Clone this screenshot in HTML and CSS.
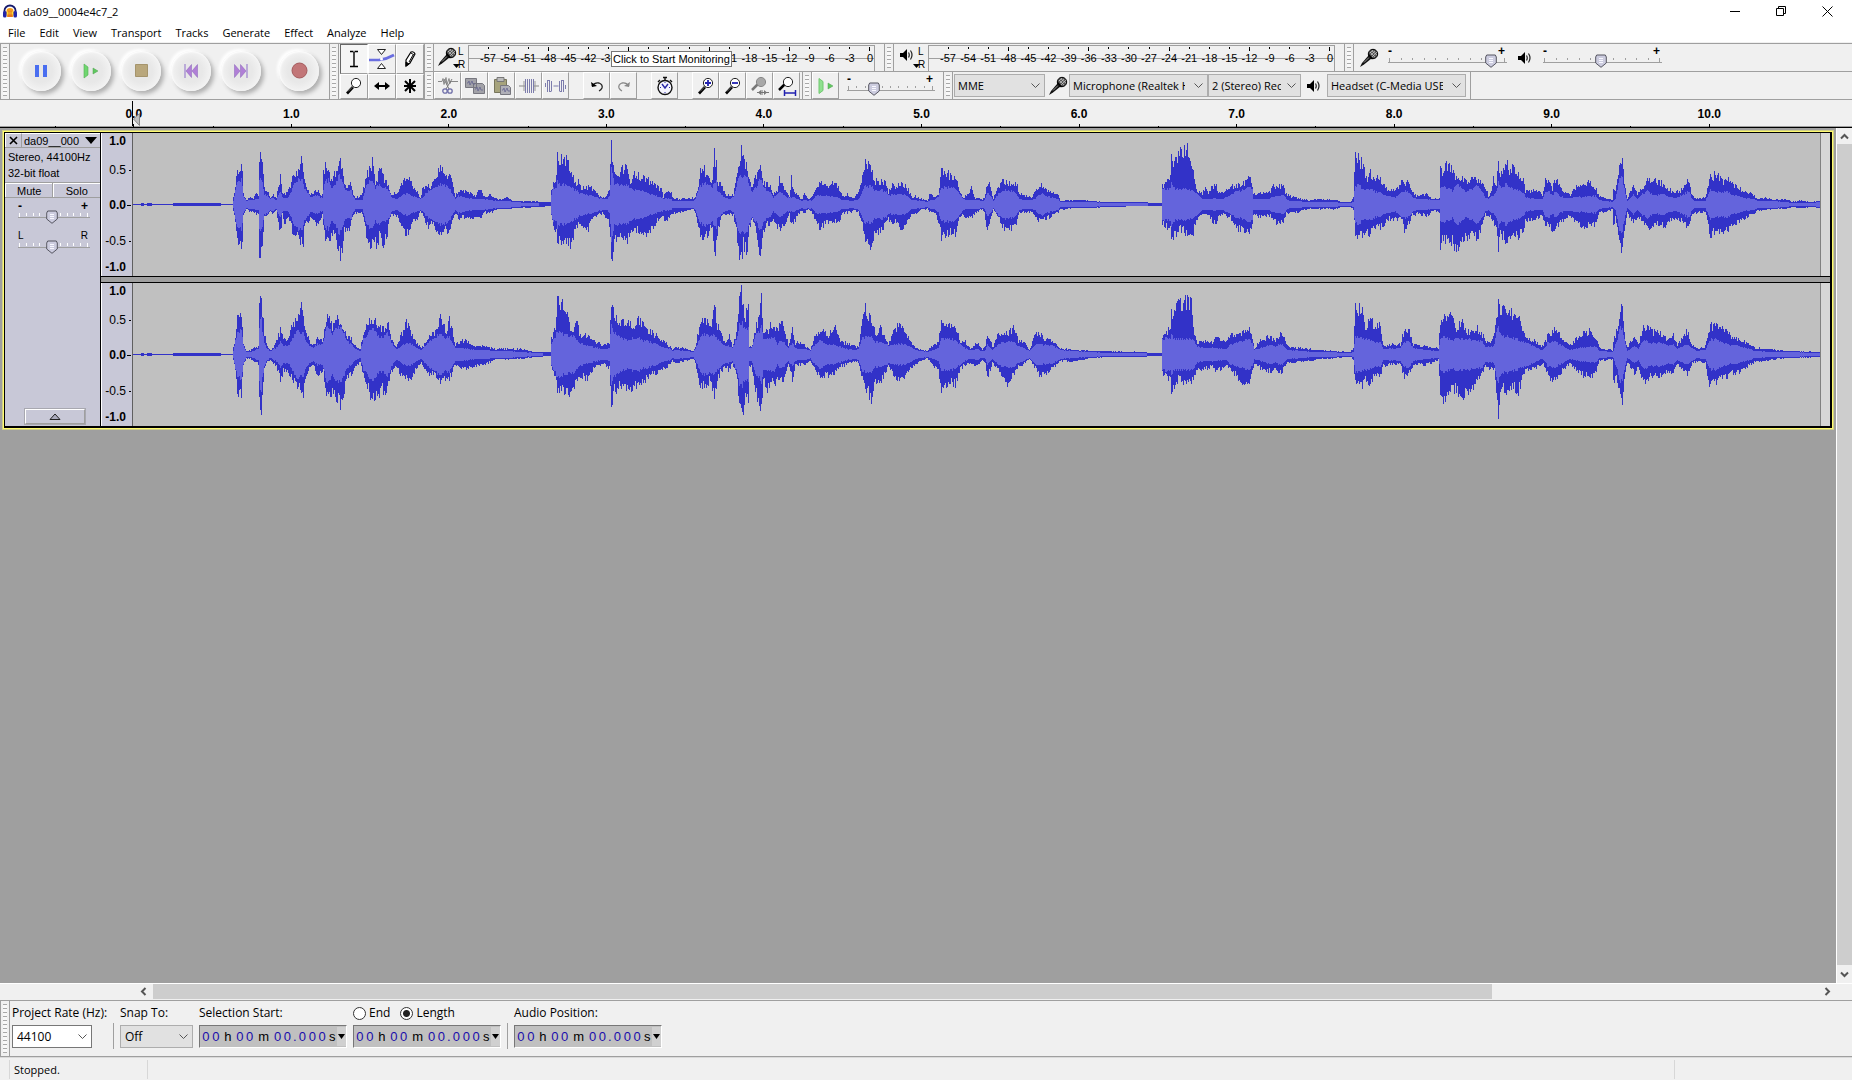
FILE: index.html
```html
<!DOCTYPE html>
<html lang="en">
<head>
<meta charset="utf-8">
<title>da09__0004e4c7_2</title>
<link rel="stylesheet" href="styles.css">
</head>
<body>
<svg class="defs" aria-hidden="true">
  <symbol id="mic" viewBox="0 0 20 20">
    <path d="M1 19L3 15L9.500 7.500L12.500 10.500L5 16.500Z" fill="#111"/>
    <path d="M5 14.500L10 9.500" stroke="#999"/>
    <circle cx="14" cy="6" r="4.700" fill="#555" stroke="#000"/>
    <path d="M11 5l3-3M12 7l4-4M13 9l5-5M11 4l5 5M13 3l5 4" stroke="#ccc" stroke-width=".7"/>
    <path d="M9.500 6.500L13.500 11" stroke="#000" stroke-width="1.500"/>
  </symbol>
  <symbol id="speaker" viewBox="0 0 14 14">
    <path d="M0 5h3l4-4v12l-4-4H0z" fill="#000"/>
    <path d="M8.500 4.500q1.500 2.500 0 5M10.500 2.500q3 4.500 0 9" fill="none" stroke="#222" stroke-width="1.200"/>
  </symbol>
  <symbol id="lens" viewBox="0 0 18 18">
    <path d="M2 16.500L8 10" stroke="#000" stroke-width="2.600"/>
    <path d="M3 14.500L8 9.500" stroke="#999" stroke-width=".7"/>
    <circle cx="11" cy="6" r="4.600" fill="#fff" stroke="#222"/>
  </symbol>
</svg>

<header class="titlebar">
  <svg class="logo" viewBox="0 0 16 15"><path d="M5 5q3-2 6 0l1 4-1 4H5L4 9z" fill="#f59a1b"/><path d="M5 9h6" stroke="#ffdf30" stroke-width="3"/><path d="M7 7v6M9 7v6" stroke="#d8431b" stroke-width=".8"/><path d="M2.500 9V6.500a5.500 5 0 0 1 11 0V9" fill="none" stroke="#151a6c" stroke-width="1.800"/><rect x="1" y="7" width="3.500" height="6.500" rx="1.500" fill="#2226a8"/><rect x="11.500" y="7" width="3.500" height="6.500" rx="1.500" fill="#2226a8"/></svg>
  <h1>da09__0004e4c7_2</h1>
  <div class="window-buttons">
    <button aria-label="Minimize"><svg width="11" height="11"><path d="M0 5.500h10" stroke="#000"/></svg></button>
    <button aria-label="Restore"><svg width="11" height="11"><path d="M.5 2.500h7v7h-7zM2.500 2.500v-2h7v7h-2" fill="none" stroke="#000"/></svg></button>
    <button aria-label="Close"><svg width="11" height="11"><path d="M.5.500l10 10M10.500.500l-10 10" stroke="#000"/></svg></button>
  </div>
</header>

<nav class="menubar">
  <button>File</button><button>Edit</button><button>View</button><button>Transport</button><button>Tracks</button><button>Generate</button><button>Effect</button><button>Analyze</button><button>Help</button>
</nav>

<section class="toolbars">
  <div class="bar transport">
    <i class="grip"></i>
    <div class="round-buttons">
      <button aria-label="Pause"><svg width="14" height="14"><path d="M1 1h4v12H1zM9 1h4v12H9z" fill="#4a6ef0"/></svg></button>
      <button aria-label="Play"><svg width="16" height="16"><path d="M1 1l4 3v8l-4 3z" fill="#6fd66f" stroke="#52b052" stroke-width=".6"/><path d="M10 5l5 3-5 3z" fill="#5fc85f" stroke="#52a052" stroke-width=".5"/></svg></button>
      <button aria-label="Stop"><svg width="13" height="13"><path d="M.5.500h12v12H.5z" fill="#b9a77c" stroke="#a5946c"/></svg></button>
      <button aria-label="Skip to start"><svg width="14" height="14"><path d="M1 0v14" stroke="#8d6cc8"/><path d="M7.500.500v13L2 7zM13.500.500v13L8 7z" fill="#b07fd6" stroke="#8861b8" stroke-width=".5"/></svg></button>
      <button aria-label="Skip to end"><svg width="14" height="14"><path d="M13 0v14" stroke="#8d6cc8"/><path d="M.5.500v13L6 7zM6.500.500v13L12 7z" fill="#b07fd6" stroke="#8861b8" stroke-width=".5"/></svg></button>
      <button class="record" aria-label="Record"><svg width="17" height="17"><circle cx="8.500" cy="8.500" r="7.500" fill="#c27678" stroke="#a45a5c"/></svg></button>
    </div>
  </div>

  <div class="bar tools">
    <i class="grip"></i>
    <div class="tool-grid">
      <button class="active" aria-label="Selection tool"><svg width="20" height="20"><path d="M6 2.500h3.500M10.500 2.500H14M10 3v14M6 17.500h8" stroke="#000" stroke-width="1.400"/></svg></button>
      <button aria-label="Envelope tool"><svg width="26" height="22"><path d="M8.500 1.500h8l-4 5zM8.500 20.500h8l-4-5z" fill="#fff" stroke="#222"/><path d="M0 12h10q8-1 15-5" fill="none" stroke="#6a6ee0" stroke-width="2.600"/><circle cx="12.500" cy="11" r="1.500" fill="#fff"/></svg></button>
      <button aria-label="Draw tool"><svg width="14" height="18"><path d="M3 10L8 2q3-1 4 2L7 13l-4 3z" fill="#fff" stroke="#000" stroke-width="1.200"/><path d="M3 12v4l3-2zM8 3l3 2M6 12l4-7" stroke="#000" fill="#000"/></svg></button>
      <button aria-label="Zoom tool"><svg width="18" height="18"><use href="#lens"/></svg></button>
      <button aria-label="Time shift tool"><svg width="18" height="12"><path d="M3 6h12" stroke="#000" stroke-width="2"/><path d="M1 6l5-4v8zM17 6l-5-4v8z"/></svg></button>
      <button aria-label="Multi-tool"><svg width="14" height="16"><path d="M7 1v14M1 8h12M2 3l10 10M12 3L2 13" stroke="#000" stroke-width="2"/></svg></button>
    </div>
  </div>

  <div class="stack">
    <div class="row">
      <div class="bar meterbar">
        <i class="grip"></i>
        <button class="meter-menu" aria-label="Record meter"><svg width="20" height="20"><use href="#mic"/></svg><svg class="drop" width="7" height="4"><path d="M0 0h7L3.500 4z"/></svg></button>
        <div class="lr"><span>L</span><span>R</span></div>
        <div class="meter"><div class="scale" data-covered="-36 -33 -30 -27 -24"></div><div class="tooltip" role="tooltip">Click to Start Monitoring</div></div>
      </div>
      <div class="bar meterbar">
        <i class="grip"></i>
        <button class="meter-menu play" aria-label="Playback meter"><svg width="14" height="14"><use href="#speaker"/></svg><svg class="drop" width="7" height="4"><path d="M0 0h7L3.500 4z"/></svg></button>
        <div class="lr"><span>L</span><span>R</span></div>
        <div class="meter"><div class="scale"></div></div>
      </div>
      <div class="bar mixer">
        <i class="grip"></i>
        <svg class="big" width="20" height="20"><use href="#mic"/></svg>
        <div class="slider wide"><span>-</span><span>+</span><input type="range" aria-label="Recording volume" min="0" max="100" value="91"></div>
        <svg width="14" height="14"><use href="#speaker"/></svg>
        <div class="slider wide"><span>-</span><span>+</span><input type="range" aria-label="Playback volume" min="0" max="100" value="49"></div>
      </div>
    </div>
    <div class="row">
      <div class="bar edit">
        <i class="grip"></i>
        <button aria-label="Cut"><svg width="20" height="20"><path d="M0 5.500h4l1-3 1 6 2-7 1 7 2-6 1 5 1-2h7" fill="none" stroke="#888"/><path d="M6 3l5 10M14 3L8 13" stroke="#777"/><circle cx="7" cy="15" r="2.200" fill="none" stroke="#6e6ea8" stroke-width="1.300"/><circle cx="12" cy="15" r="2.200" fill="none" stroke="#6e6ea8" stroke-width="1.300"/></svg></button>
        <button aria-label="Copy"><svg width="22" height="18"><path d="M1.500 1.500h11v9h-11zM9.500 6.500h9l2 2v8h-11z" fill="#a2a2a8" stroke="#77777f"/><path d="M3 6h1l1-2 1 4 2-4 1 3h2M11 12h1l1-2 1 4 2-4 1 3h2" fill="none" stroke="#666690" stroke-width=".8"/></svg></button>
        <button aria-label="Paste"><svg width="20" height="20"><path d="M2.500 3.500h12v13h-12z" fill="#a6a37c" stroke="#77755c"/><path d="M5 1.500h7v4H5z" fill="#bbb" stroke="#777"/><path d="M8.500 9.500h8l2 2v7h-10z" fill="#b0b0b8" stroke="#77777f"/><path d="M10 14h1l1-2 1 4 2-4 1 3h2" fill="none" stroke="#666690" stroke-width=".8"/></svg></button>
        <button aria-label="Trim"><svg width="20" height="16"><path d="M0 8h6M15 8h5" stroke="#888"/><path d="M6.500 1v14M8.500 1v14M10.500 1v14M12.500 1v14M14.500 1v14" stroke="#7c7cac"/><path d="M5 3v10M16 3v10" stroke="#999"/></svg></button>
        <button aria-label="Silence"><svg width="22" height="16"><path d="M.5 9V5M2.500 14V2M4.500 14V2M6.500 13V3M8.500 8h5M14.500 13V3M16.500 14V2M18.500 14V2M20.500 11V7M2.500 2.500h2M4.500 13.500h2M14.500 13.500h2M16.500 2.500h2" fill="none" stroke="#7c7cac"/></svg></button>
        <button class="gap-wide" aria-label="Undo"><svg width="14" height="12"><path d="M2 6q3-4 7-3 4 1.500 3 5-1 2-3 3" fill="none" stroke="#222" stroke-width="1.300"/><path d="M1 2l1 5 5-1z"/></svg></button>
        <button aria-label="Redo"><svg width="14" height="12"><path d="M12 6Q9 2 5 3 1 4.500 2 8q1 2 3 3" fill="none" stroke="#888" stroke-width="1.300"/><path d="M13 2l-1 5-5-1z" fill="#888"/></svg></button>
        <button class="gap-wide" aria-label="Sync-lock tracks"><svg width="18" height="20"><path d="M7 1.500h4M9 1v3M14 4l2 2M4 4L2 6" stroke="#111" stroke-width="1.400"/><circle cx="9" cy="11.500" r="7" fill="#f5f5ff" stroke="#111" stroke-width="1.400"/><path d="M6 8l3 4 3-4" fill="none" stroke="#2929a8" stroke-width="1.400"/><path d="M9 6v1M9 16v1M4 11.500h1M13 11.500h1" stroke="#2929a8"/></svg></button>
        <button class="gap-wide" aria-label="Zoom in"><svg width="18" height="18"><use href="#lens"/><path d="M11 3v6M8 6h6" stroke="#2222b0" stroke-width="1.800"/></svg></button>
        <button aria-label="Zoom out"><svg width="18" height="18"><use href="#lens"/><path d="M8 6h6" stroke="#2222b0" stroke-width="1.800"/></svg></button>
        <button aria-label="Fit selection"><svg width="20" height="20"><path d="M2 14l6-6" stroke="#777" stroke-width="2.500"/><circle cx="11" cy="6" r="4.600" fill="#a8a8a8" stroke="#888"/><path d="M7 16.500h12M12 14v5" stroke="#777"/><path d="M11 14v5l-3-2.500zM14 14v5l3-2.500z" fill="#777"/></svg></button>
        <button aria-label="Fit project"><svg width="20" height="20"><path d="M2 14l6-6" stroke="#000" stroke-width="2.500"/><circle cx="11" cy="6" r="4.600" fill="#fff" stroke="#222"/><path d="M7 17h12M7.500 14v6M18.500 14v6" stroke="#2222b0" stroke-width="1.500"/></svg></button>
      </div>
      <div class="bar speed">
        <i class="grip"></i>
        <button aria-label="Play at speed"><svg width="16" height="16"><path d="M1 .5l4 3v9l-4 3z" fill="#8fe08f" stroke="#6fc86f"/><path d="M10 5l5 3-5 3z" fill="#5fc85f" stroke="#52a052" stroke-width=".5"/></svg></button>
        <div class="slider mid"><span>-</span><span>+</span><input type="range" aria-label="Playback speed" min="0" max="100" value="28"></div>
      </div>
      <div class="bar device">
        <i class="grip"></i>
        <select class="w-host" aria-label="Audio host"><option>MME</option></select>
        <svg class="devmic" width="20" height="20"><use href="#mic"/></svg>
        <select class="w-input" aria-label="Recording device"><option>Microphone (Realtek High Definition)</option></select>
        <select class="w-channels" aria-label="Recording channels"><option>2 (Stereo) Recording Channels</option></select>
        <svg class="devspk" width="14" height="14"><use href="#speaker"/></svg>
        <select class="w-output" aria-label="Playback device"><option>Headset (C-Media USB Audio)</option></select>
      </div>
    </div>
  </div>
</section>

<div class="timeline">
  <div class="seconds">
    <span>0.0</span><span>1.0</span><span>2.0</span><span>3.0</span><span>4.0</span><span>5.0</span><span>6.0</span><span>7.0</span><span>8.0</span><span>9.0</span><span>10.0</span>
  </div>
  <svg class="cursor" width="8" height="25"><path d="M.5 0v25" stroke="#000"/><path d="M7.500 12.500v12L1.500 18z" fill="#c0c0c0" stroke="#888"/></svg>
</div>

<main class="project">
  <div class="workspace">
    <article class="track">
      <div class="panel">
        <div class="panel-title">
          <button class="close" aria-label="Close track"><svg width="9" height="9"><path d="M1 1l7 7M8 1L1 8" stroke="#000" stroke-width="1.600"/></svg></button>
          <button class="name"><span>da09__000</span><svg width="12" height="7"><path d="M0 0h12L6 7z"/></svg></button>
        </div>
        <p>Stereo, 44100Hz<br>32-bit float</p>
        <div class="mute-solo"><button>Mute</button><button>Solo</button></div>
        <div class="slider small"><span>-</span><span>+</span><input type="range" aria-label="Gain" min="0" max="100" value="47"></div>
        <div class="slider small pan"><span>L</span><span>R</span><input type="range" aria-label="Pan" min="0" max="100" value="47"></div>
        <button class="collapse" aria-label="Collapse"><svg width="12" height="7"><path d="M1 6.500h10L6 1z" fill="#aaaabc" stroke="#222"/></svg></button>
      </div>
      <div class="channels">
        <div class="channel">
          <div class="vruler"><b>1.0</b><span>0.5</span><b class="zero">0.0</b><span>-0.5</span><b>-1.0</b></div>
          <svg class="wave" data-channel="left" viewBox="0 0 1687 143" preserveAspectRatio="none"></svg>
          <i class="after"></i>
        </div>
        <i class="divider"></i>
        <div class="channel">
          <div class="vruler"><b>1.0</b><span>0.5</span><b class="zero">0.0</b><span>-0.5</span><b>-1.0</b></div>
          <svg class="wave" data-channel="right" viewBox="0 0 1687 143" preserveAspectRatio="none"></svg>
          <i class="after"></i>
        </div>
      </div>
    </article>
  </div>
  <div class="vscroll">
    <button aria-label="Scroll up"><svg width="9" height="7"><path d="M1 5.500l3.500-3.500L8 5.500" fill="none" stroke="#555" stroke-width="2"/></svg></button>
    <i></i>
    <button aria-label="Scroll down"><svg width="9" height="7"><path d="M1 1.500L4.500 5 8 1.500" fill="none" stroke="#555" stroke-width="2"/></svg></button>
  </div>
</main>
<div class="hscroll">
  <button aria-label="Scroll left"><svg width="7" height="9"><path d="M5.500 1L2 4.500 5.500 8" fill="none" stroke="#555" stroke-width="2"/></svg></button>
  <div class="lane"><i></i></div>
  <button aria-label="Scroll right"><svg width="7" height="9"><path d="M1.500 1L5 4.500 1.500 8" fill="none" stroke="#555" stroke-width="2"/></svg></button>
</div>

<section class="selection">
  <i class="grip"></i>
  <div class="group rate"><label for="rate">Project Rate (Hz):</label><select id="rate"><option>44100</option></select></div>
  <i class="rule"></i>
  <div class="group snap"><label for="snap">Snap To:</label><select id="snap"><option>Off</option></select></div>
  <div class="group"><span class="caption">Selection Start:</span><div class="time"></div></div>
  <div class="group"><div class="radios"><label><input type="radio" name="span">End</label><label><input type="radio" name="span" checked>Length</label></div><div class="time"></div></div>
  <i class="rule"></i>
  <div class="group"><span class="caption">Audio Position:</span><div class="time"></div></div>
</section>
<footer class="status"><span></span><span>Stopped.</span><span></span><span></span></footer>
<script src="script.js"></script>
</body>
</html>
```
FILE: styles.css
```css
* { box-sizing: border-box; }
html, body { height: 100%; }
body {
  margin: 0;
  display: flex;
  flex-direction: column;
  background: #f0f0f0;
  color: #000;
  font: 11px/16px "Open Sans", "Noto Sans", sans-serif;
  overflow: hidden;
}
button { margin: 0; padding: 0; border: 0; background: none; font: inherit; color: inherit; display: flex; align-items: center; justify-content: center; }
svg { display: block; flex: none; }
i { display: block; flex: none; }
.defs { position: absolute; width: 0; height: 0; }

.titlebar { display: flex; align-items: center; height: 23px; flex: none; padding: 0 2px; background: #fff; }
.logo { width: 16px; height: 15px; }
.titlebar h1 { margin: 0 auto 0 5px; font-size: 11px; font-weight: 400; }
.window-buttons { display: flex; height: 20px; }
.window-buttons button { width: 46px; }
.menubar { display: flex; height: 20px; flex: none; padding-left: 1px; background: #fff; border-bottom: 1px solid #f0f0f0; }
.menubar button { padding: 0 7px; }

.toolbars { display: flex; height: 57px; flex: none; border-top: 1px solid #9f9f9f; border-bottom: 1px solid #9f9f9f; }
.bar { display: flex; align-items: center; flex: none; }
.grip {
  width: 10px;
  align-self: stretch;
  border: solid #9f9f9f;
  border-width: 0 1px;
  padding: 3px 2px;
  background: repeating-linear-gradient(#a8a8a8 0 1px, #f8f8f8 1px 4px) content-box;
}
.transport { width: 329px; }
.round-buttons { display: flex; gap: 10px; padding: 0 0 2px 11px; }
.round-buttons button {
  width: 40px;
  height: 40px;
  border-radius: 50%;
  background: radial-gradient(circle, #e8e8e8 0 40%, #f4f4f4 75%);
  box-shadow: 3px 3px 4px #b0b0b0, -2px -2px 3px #fff, inset 1px 1px 2px #fff;
}
.round-buttons .record { margin-left: 8px; }
.tools { width: 95px; }
.tool-grid { display: grid; grid-template-columns: repeat(3, 1fr); flex: 1; align-self: stretch; padding-left: 1px; }
.tool-grid button, .edit button, .speed > button { border: 1px solid; border-color: #fff #9f9f9f #9f9f9f #fff; overflow: hidden; }
.tool-grid .active { border-color: #666 #fff #9f9f9f #666; background: #f5f5f5; }
.stack { flex: 1; min-width: 0; }
.row { display: flex; height: 28px; }
.row:first-child { border-bottom: 1px solid #9f9f9f; }
.row:last-child { height: 27px; }

.meterbar { width: 460px; }
.meter-menu { position: relative; width: 30px; height: 24px; justify-content: flex-start; padding: 0 0 2px 3px; }
.meter-menu.play { padding: 0 0 6px 6px; }
.meter-menu .drop { position: absolute; right: 4px; bottom: 2px; }
.lr { width: 10px; margin-left: -6px; flex: none; }
.lr span { display: block; font: 10px/13px "Liberation Sans", Arial, sans-serif; }
.meter {
  position: relative;
  width: 407px;
  height: 26px;
  border: 1px solid #9f9f9f;
  border-width: 1px 1px 0 1px;
  background: linear-gradient(#9f9f9f, #9f9f9f) 0 12px / 100% 1px no-repeat;
  font: 11px/12px "Liberation Sans", Arial, sans-serif;
}
.scale { display: grid; grid-template-columns: repeat(20, 1fr); margin: 0 -6px 0 9px; }
.scale span { text-align: center; }
.scale span::before { content: ""; display: block; width: 1px; height: 2px; margin: 1px auto 3px; background: #000; }
.scale span:nth-child(4n)::before { height: 4px; margin-bottom: 1px; }
.tooltip { position: absolute; left: 142px; top: 5px; border: 1px solid #777; background: #fff; padding: 1px; white-space: nowrap; }
.mixer { flex: 1; }
.mixer .big { margin: 0 9px 0 5px; }
.mixer .slider + svg { margin: 0 11px; }

.slider { position: relative; height: 22px; padding-right: 2px; display: flex; justify-content: space-between; font: bold 12px/8px "Liberation Sans", Arial, sans-serif; flex: none; }
.wide { width: 119px; }
.mid { width: 88px; margin-left: 8px; }
.small { width: 72px; color: #000; }
.slider .ticks { position: absolute; left: 0; right: 0; top: 11px; height: 5px; display: flex; justify-content: space-between; padding: 0 2px 0 1px; border-bottom: 1px solid #9f9f9f; }
.ticks i { width: 1px; height: 2px; background: #9f9f9f; }
.ticks i:first-child, .ticks i:last-child { height: 4px; }
.small .ticks i { height: 3px; background: #fff; }
.small .ticks i:first-child, .small .ticks i:last-child { height: 4px; }
.slider input { position: absolute; left: 0; top: 7px; width: 100%; height: 15px; margin: 0; appearance: none; background: none; }
.slider input::-webkit-slider-thumb {
  appearance: none;
  width: 12px;
  height: 14px;
  background: url("data:image/svg+xml,%3Csvg xmlns='http://www.w3.org/2000/svg' width='12' height='14'%3E%3Cpath d='M.7 3l1-2h8.600l1 2v6L6 13.300.7 9z' fill='%23ccccdf' stroke='%23555560'/%3E%3Cpath d='M4 4.500h4M4 6.500h4M4 8.500h4' stroke='%23f8f8ff'/%3E%3C/svg%3E");
}

.edit { width: 378px; }
.edit button, .speed > button { width: 27px; height: 27px; flex: none; }
.edit .gap-wide { margin-left: 14px; }
.speed { width: 141px; }
.device { width: 528px; border-right: 1px solid #9f9f9f; }
select {
  appearance: none;
  height: 23px;
  margin: 0;
  padding: 0 24px 0 4px;
  border: 1px solid #adadad;
  border-radius: 0;
  background: #e1e1e1 url("data:image/svg+xml,%3Csvg xmlns='http://www.w3.org/2000/svg' width='9' height='6'%3E%3Cpath d='M.5.500l4 4 4-4' fill='none' stroke='%23555'/%3E%3C/svg%3E") right 4px center no-repeat;
  color: #000;
  font: 11px/16px "Open Sans", "Noto Sans", sans-serif;
  overflow: hidden;
  text-overflow: clip;
}
.device select { padding-right: 19px; padding-left: 3px; }
.device .w-input, .device .w-output { padding-right: 22px; }
.w-host { width: 91px; margin-left: 1px; }
.devmic { margin: 0 1px 0 3px; }
.w-input { width: 139px; }
.w-channels { width: 93px; }
.devspk { margin: 0 6px 0 6px; }
.w-output { width: 139px; }

.timeline { position: relative; height: 28px; flex: none; border-bottom: 1px solid #000; box-shadow: inset 0 -1px #9f9f9f; padding: 1px 64px 0 55px; }
.seconds { display: grid; grid-template-columns: repeat(11, 1fr); height: 25px; }
.seconds span {
  text-align: center;
  font: bold 12px/27px "Liberation Sans", Arial, sans-serif;
  background: linear-gradient(#000, #000) center bottom / 1px 4px no-repeat, linear-gradient(#000, #000) left bottom / 1px 2px no-repeat;
}
.cursor { position: absolute; left: 132px; top: 1px; }

.project { display: flex; flex: 1; min-height: 0; }
.workspace { flex: 1; min-width: 0; background: #9f9f9f; padding: 3px 3px 0 3px; }
.track { display: flex; border: 1px solid #fffb70; box-shadow: 0 0 0 1px #cfcf88; padding: 1px 2px 2px 1px; background: #000; }
.panel { width: 96px; flex: none; display: flex; flex-direction: column; background: #c8c8d7; border-right: 1px solid #000; font: 11px/16px "Liberation Sans", Arial, sans-serif; }
.panel-title, .mute-solo { display: flex; flex: none; height: 15px; border-bottom: 1px solid #9f9f9f; }
.panel-title button, .mute-solo button { border: solid #fff; border-width: 1px 0 0 1px; line-height: 12px; }
.close { width: 16px; }
.panel .name { flex: 1; justify-content: space-between; padding: 0 3px 0 2px; border-left: 1px solid #9f9f9f; }
.panel p { margin: 0; padding: 1px 3px; }
.mute-solo { border-top: 1px solid #9f9f9f; height: 16px; }
.mute-solo button { flex: 1; }
.mute-solo button + button { box-shadow: -1px 0 #9f9f9f; }
.small { margin: 4px 0 0 13px; height: 22px; }
.small.pan { margin-top: 8px; font-weight: 400; font-size: 10px; }
.collapse { width: 60px; height: 15px; margin: auto 0 2px 20px; border: 1px solid; border-color: #fff #9f9f9f #9f9f9f #fff; outline: 1px solid #a8a8b0; }
.channels { flex: 1; min-width: 0; }
.channel { display: flex; height: 143px; background: #c0c0c0; }
.vruler { width: 32px; flex: none; display: grid; grid-template-rows: 16px 42px 28px 44px 13px; background: #c8c8d7; border-right: 1px solid #606060; border-left: 1px solid #fff; font: 12px/12px "Liberation Sans", Arial, sans-serif; align-items: center; }
.vruler > * { text-align: right; padding-right: 6px; background: linear-gradient(#000, #000) right 1px center / 2px 1px no-repeat; }
.vruler .zero { background-size: 4px 1px; }
.vruler b:first-child, .vruler b:last-child { background: none; }
.vruler b:last-child { align-self: start; line-height: 9px; }
.wave { flex: 1; min-width: 0; height: 143px; }
.after { width: 10px; background: #d6d6d6; border-left: 1px solid #808080; }
.divider { height: 7px; border: solid #000; border-width: 1px 0; background: #9f9f9f; }
.vscroll { width: 16px; display: flex; flex-direction: column; border-left: 1px solid #fff; padding-top: 1px; }
.vscroll i { flex: 1; background: #cdcdcd; }
.vscroll button { height: 15px; }
.vscroll button:last-child { height: 18px; }
.hscroll { display: flex; height: 18px; flex: none; border-top: 1px solid #fff; border-bottom: 1px solid #9f9f9f; padding: 0 16px 1px 135px; }
.hscroll button { width: 17px; }
.lane { flex: 1; }
.lane i { width: calc(80% + 5px); height: 15px; margin-left: 1px; background: #cdcdcd; }

.selection { display: flex; height: 55px; flex: none; font-size: 12px; }
.selection .group { display: flex; flex-direction: column; padding-top: 4px; gap: 4px; margin-right: 6px; white-space: nowrap; }
.selection .rate { width: 95px; margin: 0 6px 0 2px; }
.selection select { font-size: 12px; }
.selection .rate select { width: 80px; background-color: #fff; border-color: #777; }
.snap select { width: 73px; }
.rule { width: 1px; height: 26px; margin: 22px 6px 0 0; background: #9f9f9f; }
.time { display: flex; width: 148px; height: 23px; padding-left: 1px; border: 1px solid; border-color: #777 #fff #fff #777; background: #c0c0c0; font: 13px/21px "Liberation Sans", Arial, sans-serif; text-align: center; }
.time span { width: 10px; color: #1a0dab; }
.time .unit { color: #000; width: 14px; }
.time .minute { width: 18px; }
.time .point { width: 5px; }
.time .unit:last-of-type { width: 10px; }
.time button { width: 9px; height: 19px; margin: 1px 0 0 auto; background: #d0d0d0; }
.radios { display: flex; gap: 10px; }
.radios label { display: flex; align-items: center; gap: 3px; height: 16px; }
.radios input { appearance: none; width: 13px; height: 13px; margin: 0; border: 1px solid #333; border-radius: 50%; background: #fff; }
.radios input:checked { background: radial-gradient(circle, #222 0 3px, #fff 4px); }

.status { display: flex; height: 24px; flex: none; border-top: 1px solid #9f9f9f; box-shadow: inset 0 1px #dadada; padding: 3px 0 1px; line-height: 20px; }
.status span { border-right: 1px solid #d7d7d7; }
.status span:nth-child(1) { width: 10px; }
.status span:nth-child(2) { width: 138px; padding-left: 4px; }
.status span:nth-child(3) { flex: 1; }
.status span:nth-child(4) { width: 177px; border: 0; }
```
FILE: script.js
```js
// Envelope key points: x, peak above zero, peak below zero, RMS.
const envelopes = {
  left: `133 0 0 0;140 0 0 0;142 1 1 0;144 0 0 0;150 1 1 0;152 0 0 0;171 0 0 0;175 1 1 0;219 1 1 0;222 0 0 0;232 0 0 0;233 8 6 3;235 16 16 14;237 36 38 22;241 42 42 24;242 40 40 20;243 10 10 8;246 3 3 3;250 7 7 4;253 5 7 4;256 12 9 5;258 8 8 5;259 52 57 25;261 45 52 25;262 42 50 22;264 16 12 10;267 14 10 8;270 6 6 5;273 9 9 6;276 5 5 4;277 13 12 7;280 28 30 12;282 10 10 7;285 10 20 6;288 14 12 7;291 20 18 12;293 30 33 18;297 34 32 24;302 45 40 26;303 38 44 22;304 25 20 15;307 14 16 12;310 10 15 7;317 14 20 9;320 10 14 7;322 9 10 7;323 30 20 15;325 38 34 22;328 33 40 24;331 26 28 17;335 30 28 20;338 40 45 28;340 42 50 28;343 28 40 22;344 18 25 15;348 20 27 14;351 22 18 13;353 10 10 7;355 6 8 4;362 10 8 4;363 15 14 8;366 30 32 20;370 36 50 24;372 42 35 24;375 22 40 16;377 25 46 18;379 38 25 20;382 28 40 16;387 22 30 15;389 15 15 13;391 10 10 6;397 11 12 5;402 22 22 9;406 25 30 10;408 28 28 10;412 18 18 8;417 12 14 6;420 5 6 5;422 15 10 6;428 18 22 14;433 20 16 16;437 32 29 18;441 40 27 20;445 25 24 18;448 32 28 18;452 20 15 10;455 8 9 5;458 14 14 8;463 14 12 7;468 12 14 6;475 8 13 5;480 16 14 5;483 8 8 5;490 9 8 4;497 5 4 3;507 6 4 3;513 3 3 2;527 3 3 1;550 2 1 0;551 13 10 10;553 20 20 16;556 30 30 18;557 52 35 22;559 47 38 20;565 46 34 19;568 40 43 18;573 30 35 16;574 20 25 14;578 24 20 12;581 16 20 10;588 18 24 9;593 15 12 8;598 9 10 6;603 6 9 5;607 10 14 5;609 16 20 8;610 40 30 20;611 58 52 35;613 45 50 25;614 32 36 20;620 33 30 20;626 38 38 18;630 25 25 16;632 28 30 14;635 30 26 14;643 27 28 13;648 24 28 10;653 20 22 9;658 16 15 7;662 14 12 6;663 6 10 5;665 12 18 6;671 14 10 5;672 6 8 3;680 5 7 3;693 6 4 3;695 7 8 5;698 20 22 14;700 36 30 18;705 34 33 21;708 30 28 20;712 25 20 16;714 50 48 20;716 40 42 22;717 22 30 14;721 20 12 9;725 11 10 6;730 7 9 5;733 10 10 7;736 25 25 18;738 40 45 25;741 56 57 30;743 45 40 26;745 42 45 27;747 40 53 26;749 26 25 18;752 15 15 12;755 28 25 16;758 36 50 22;761 37 42 24;763 22 30 18;766 20 18 14;770 18 20 11;773 10 14 7;777 14 22 9;779 27 25 12;783 18 22 10;787 10 14 6;789 8 8 6;791 27 22 7;793 14 18 7;798 8 10 5;801 5 6 3;804 10 9 4;808 4 3 3;812 8 8 4;815 16 16 8;820 22 24 9;825 18 18 8;830 20 16 8;834 22 17 7;838 16 18 6;843 8 8 4;847 10 8 4;853 5 6 3;858 11 7 5;862 30 20 13;865 43 34 18;868 38 40 18;872 33 40 17;874 22 25 14;877 24 30 14;882 22 24 14;886 22 16 12;888 10 14 8;892 24 20 10;895 16 16 9;900 22 24 10;905 18 20 9;908 14 14 7;912 6 8 4;915 8 9 4;922 5 4 3;927 3 4 2;929 9 7 3;935 8 9 5;938 11 16 7;941 34 33 16;945 35 29 17;950 28 28 16;955 27 30 16;958 18 15 12;962 6 10 6;967 9 12 4;971 16 13 4;975 6 8 4;982 5 4 3;984 7 8 4;987 22 26 10;989 20 20 10;993 5 4 3;997 16 10 9;1002 24 22 14;1007 22 28 14;1012 20 22 13;1016 22 18 11;1019 10 8 5;1027 8 7 4;1032 7 8 4;1038 18 15 8;1042 19 14 10;1045 14 14 9;1050 12 12 7;1055 10 8 6;1058 9 8 5;1060 3 5 2;1077 4 3 2;1093 3 3 2;1103 2 2 1;1147 2 1 1;1148 1 1 0;1161 1 1 0;1162 18 18 14;1165 22 20 15;1170 27 24 15;1171 44 40 20;1173 40 32 16;1175 54 32 15;1177 50 26 15;1183 54 24 15;1186 58 30 15;1189 50 32 15;1192 36 33 14;1194 24 22 12;1197 14 14 10;1202 10 10 5;1205 20 11 5;1208 12 10 5;1215 20 20 6;1218 13 13 5;1223 11 10 5;1230 17 12 9;1235 19 22 12;1240 19 25 13;1245 22 26 15;1249 30 27 18;1252 20 20 14;1253 9 10 5;1258 11 12 5;1268 11 10 5;1272 17 13 8;1277 20 20 8;1283 17 16 9;1286 10 9 5;1290 8 8 3;1298 6 7 3;1307 4 4 2;1318 5 4 2;1335 4 4 2;1342 2 2 1;1350 2 2 1;1353 6 5 2;1354 35 15 14;1355 48 30 18;1358 46 34 20;1363 40 28 14;1367 24 22 14;1369 38 36 14;1372 25 22 14;1376 28 24 12;1380 24 22 12;1383 20 22 9;1388 15 14 8;1395 14 15 7;1402 22 14 12;1404 20 27 13;1408 22 20 12;1412 13 10 7;1417 8 9 5;1427 10 11 5;1432 5 5 4;1439 6 8 4;1440 34 44 15;1442 32 36 18;1445 41 36 17;1452 36 36 13;1454 30 42 17;1457 28 46 19;1463 26 36 14;1468 22 32 13;1472 26 28 15;1476 26 34 18;1482 20 22 12;1485 16 10 7;1488 9 11 5;1490 10 11 7;1493 25 18 9;1496 16 25 12;1498 42 42 22;1500 32 30 16;1503 36 32 18;1506 46 40 20;1508 32 38 16;1512 37 32 16;1517 30 32 14;1523 26 26 12;1525 12 16 6;1530 14 15 6;1535 14 14 5;1542 9 12 5;1545 26 24 12;1548 22 20 13;1552 16 24 8;1555 25 22 12;1560 18 18 8;1565 12 13 6;1570 10 12 6;1577 18 18 7;1583 20 22 7;1590 22 20 8;1595 18 20 8;1599 7 7 4;1607 6 7 3;1612 4 4 2;1613 14 24 3;1615 12 10 5;1617 26 25 15;1619 44 42 26;1620 49 46 26;1622 49 46 26;1623 32 36 20;1625 14 20 10;1627 5 6 3;1630 14 15 6;1633 20 18 9;1637 10 12 5;1642 18 16 10;1643 13 16 10;1647 26 24 14;1652 26 20 9;1657 23 20 9;1663 20 22 10;1670 14 15 7;1675 12 13 6;1682 14 16 9;1687 25 24 12;1689 22 20 12;1691 10 12 6;1695 5 8 3;1705 7 7 3;1707 14 18 8;1710 29 31 14;1717 29 26 12;1723 22 26 12;1728 27 25 12;1732 20 20 9;1737 16 17 8;1745 13 14 6;1752 10 9 5;1757 5 6 3;1765 6 5 3;1773 4 4 3;1785 5 4 2;1792 2 2 1;1800 4 3 1;1810 2 2 1;1820 3 2 2`,
  right: `133 0 0 0;140 0 0 0;142 1 1 0;144 0 0 0;150 1 1 0;152 0 0 0;171 0 0 0;175 1 1 0;219 1 1 0;222 0 0 0;232 0 0 0;233 8 6 3;235 16 16 14;237 36 38 22;241 42 41 24;243 10 10 8;246 3 3 2;250 4 4 2;258 8 9 5;259 50 50 25;260 60 62 34;261 56 60 34;262 44 50 24;264 20 12 10;267 8 7 5;270 4 5 3;275 10 10 6;277 16 14 7;280 24 26 12;283 15 16 8;288 14 18 8;291 26 22 14;297 38 32 24;301 46 34 22;303 36 46 24;305 25 22 15;308 18 18 10;310 9 12 7;313 9 10 6;317 16 20 10;321 14 18 9;323 15 14 12;325 30 34 24;328 40 44 26;332 28 35 20;338 36 46 28;341 34 52 28;343 25 42 22;346 18 22 14;351 15 20 10;355 8 12 5;360 5 7 3;363 22 22 15;367 28 30 20;371 38 48 26;374 34 44 24;378 28 42 18;382 26 34 16;385 24 38 20;387 36 34 22;391 15 16 12;396 8 12 5;402 22 22 8;406 32 25 11;409 26 28 11;415 14 16 7;421 6 8 4;428 16 20 12;435 22 18 17;440 38 30 20;446 22 22 16;449 36 25 18;455 10 10 6;463 14 15 6;475 9 11 4;488 7 8 4;495 5 4 3;505 5 4 3;522 5 4 2;535 2 2 1;550 2 1 0;551 15 12 10;555 28 25 18;557 52 34 22;565 48 37 19;569 28 44 18;573 25 32 18;577 32 28 14;579 20 20 10;588 19 24 9;593 13 14 7;602 9 9 5;609 12 13 6;610 30 30 20;611 52 52 30;613 44 36 22;620 32 32 16;627 34 32 14;632 25 34 16;638 34 30 16;645 28 26 13;653 20 18 11;658 18 18 9;665 11 12 6;670 8 10 5;672 4 6 3;675 8 8 4;685 5 6 3;693 3 4 2;695 7 8 5;700 34 32 18;705 34 32 20;710 28 24 18;714 48 44 20;717 28 25 15;720 25 18 12;725 10 12 8;729 20 16 8;732 7 8 6;736 20 18 15;738 40 40 25;740 66 50 32;742 58 62 30;743 44 60 28;745 40 34 24;748 44 44 26;749 8 12 6;751 6 12 6;755 25 35 18;759 38 52 22;761 54 57 28;763 20 26 15;767 24 34 15;770 28 26 16;774 26 30 18;777 24 28 10;780 32 24 14;784 27 24 11;788 9 10 6;792 26 24 11;795 8 10 6;797 12 10 5;805 9 9 5;810 4 5 3;813 14 12 8;820 26 22 14;828 20 20 9;835 26 18 9;840 14 12 7;847 10 9 5;855 8 6 4;858 7 8 5;862 35 22 16;865 46 34 17;871 34 44 17;875 20 28 12;880 28 28 12;884 18 20 11;888 9 12 8;893 22 20 9;898 30 24 10;903 24 24 10;910 13 14 7;915 6 9 4;927 3 3 2;930 7 8 3;938 11 16 6;941 34 36 15;950 32 26 15;955 30 30 14;960 12 14 9;965 12 10 6;970 5 8 4;976 12 12 5;982 4 5 3;985 8 9 4;987 23 24 9;992 7 8 4;997 18 14 9;1003 22 22 12;1007 20 30 12;1014 28 20 13;1018 14 12 8;1025 10 8 5;1029 3 3 3;1034 18 12 8;1039 22 20 10;1043 16 20 9;1053 13 12 8;1060 6 6 4;1073 4 7 3;1090 3 3 2;1105 3 2 1;1145 2 2 1;1147 1 1 0;1161 1 1 0;1162 15 18 14;1165 22 22 16;1170 25 24 16;1171 44 40 20;1173 35 30 16;1175 54 32 15;1178 48 24 15;1185 54 30 15;1191 50 28 15;1194 24 22 12;1197 12 14 8;1202 13 14 6;1213 12 12 6;1216 20 18 6;1225 11 10 5;1230 19 15 10;1240 20 26 12;1249 29 32 16;1252 15 18 10;1254 6 8 4;1260 14 14 6;1270 18 16 9;1275 14 16 8;1281 22 18 10;1287 8 8 4;1300 6 7 3;1320 4 4 2;1350 2 2 1;1353 6 4 2;1355 48 30 18;1362 46 30 16;1366 25 24 15;1370 42 30 14;1374 24 20 12;1380 30 22 12;1383 9 11 5;1400 10 9 6;1404 25 24 12;1409 22 18 12;1413 9 9 6;1425 8 10 4;1438 6 5 3;1440 32 36 14;1443 36 46 18;1451 38 36 14;1456 25 34 15;1461 33 42 15;1468 22 36 15;1476 27 28 14;1482 20 18 12;1485 13 13 7;1490 12 14 7;1494 20 16 9;1496 36 40 22;1498 52 57 28;1501 42 34 18;1505 46 36 18;1512 40 32 16;1518 38 36 14;1525 18 16 11;1533 14 14 8;1541 8 10 4;1543 9 9 5;1548 20 22 12;1555 25 26 12;1562 16 16 8;1569 8 9 4;1578 18 18 6;1590 23 23 7;1596 15 16 7;1599 6 6 3;1612 4 4 2;1613 14 24 3;1617 26 25 15;1619 42 40 26;1620 49 47 26;1622 49 47 26;1625 14 20 10;1627 6 7 3;1634 19 18 8;1638 9 12 5;1643 29 29 14;1650 24 22 11;1662 20 20 11;1668 14 18 8;1673 19 19 9;1677 8 10 5;1687 24 20 10;1691 10 10 6;1697 5 6 3;1705 8 8 4;1709 26 30 14;1714 31 28 15;1722 26 24 12;1729 20 20 9;1738 15 18 8;1746 12 12 6;1755 6 7 3;1770 5 5 2;1785 3 3 2;1820 2 2 1`
};

const noise = n => {
  const s = Math.sin(n * 127.1) * 43758.5453;
  return s - Math.floor(s);
};
const columns = bars => bars.map(([x, up, down]) => `M${x} ${71 - up}h1v${up + down + 1}h-1z`).join('');

document.querySelectorAll('.wave').forEach((svg, channel) => {
  const keys = envelopes[svg.dataset.channel].split(';').map(k => k.split(' ').map(Number));
  const peak = [], rms = [];
  let k = 0;
  for (let x = 133; x < 1820; x++) {
    while (keys[k + 1][0] <= x) k++;
    const a = keys[k], b = keys[k + 1];
    const t = (x - a[0]) / (b[0] - a[0]);
    const at = i => a[i] + (b[i] - a[i]) * t;
    const seed = x + channel * 5000;
    const core = Math.round(at(3) * (0.9 + 0.2 * noise(seed + 0.3)));
    const reach = (v, n) => v < 2 ? Math.round(v) : Math.max(core + 1, Math.round(v * (0.8 + 0.34 * n)));
    peak.push([x - 133, reach(at(1), noise(seed)), reach(at(2), noise(seed + 0.7))]);
    if (core > 0) rms.push([x - 133, core, core]);
  }
  svg.innerHTML = `<path fill="#3232c8" d="${columns(peak)}"/><path fill="#6464dc" d="${columns(rms)}"/>`;
});

// Labels listed in data-covered sit wholly under the tooltip and are left blank.
document.querySelectorAll('.scale').forEach(scale => {
  const covered = (scale.dataset.covered || '').split(' ');
  for (let db = -57; db <= 0; db += 3) {
    scale.insertAdjacentHTML('beforeend', `<span>${covered.includes(String(db)) ? '' : db}</span>`);
  }
});

document.querySelectorAll('.slider input').forEach(input => {
  input.insertAdjacentHTML('beforebegin', `<div class="ticks">${'<i></i>'.repeat(11)}</div>`);
});

document.querySelectorAll('.time').forEach(time => {
  const kinds = { h: 'unit', m: 'unit minute', '.': 'point', s: 'unit' };
  time.innerHTML = [...'00h00m00.000s'].map(c => `<span class="${kinds[c] || 'digit'}">${c}</span>`).join('') +
    '<button aria-label="Time format"><svg width="7" height="5"><path d="M0 0h7L3.500 5z"/></svg></button>';
});
```
